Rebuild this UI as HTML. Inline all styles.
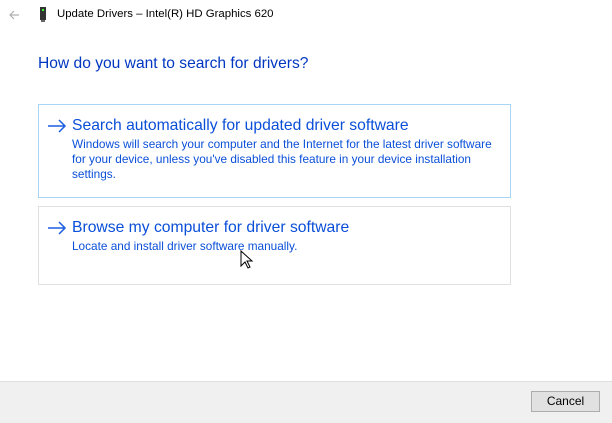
<!DOCTYPE html>
<html><head><style>
body{margin:0;width:612px;height:422px;background:#fff;position:relative;font-family:"Liberation Sans",sans-serif;overflow:hidden}
.a{position:absolute}
.box{position:absolute;left:38px;width:471px;border:1px solid #e0e0e0}
.t{position:absolute;left:33px;font-size:15.7px;color:#0a4fd8;white-space:nowrap}
.d{position:absolute;left:33px;font-size:11.8px;line-height:15px;color:#0a4fd8;width:432px}
.ar{position:absolute;left:8px;top:14px}
</style></head><body>
<svg class="a" style="left:8px;top:9px" width="12" height="12"><path d="M11 6H2M6 2L2 6l4 4" stroke="#b0b0b0" stroke-width="1.2" fill="none"/></svg>
<svg class="a" style="left:40px;top:7px" width="8" height="16"><rect x="0" y="0" width="6" height="13" fill="#333"/><rect x="2" y="2" width="2" height="2" fill="#3f3"/><rect x="1" y="13" width="4" height="2" fill="#666"/></svg>
<div class="a" style="left:57px;top:8px;font-size:11.4px;color:#000">Update Drivers – Intel(R) HD Graphics 620</div>
<div class="a" style="left:38px;top:55px;font-size:15.6px;color:#0037c0">How do you want to search for drivers?</div>
<div class="box" style="top:104px;height:92px;border-color:#a6d5f5">
<svg class="ar" width="20" height="14"><path d="M1 7H18M12 1l6 6-6 6" stroke="#1a5fe0" stroke-width="1.5" fill="none"/></svg>
<div class="t" style="top:12px">Search automatically for updated driver software</div>
<div class="d" style="top:32px">Windows will search your computer and the Internet for the latest driver software for your device, unless you've disabled this feature in your device installation settings.</div>
</div>
<div class="box" style="top:206px;height:77px">
<svg class="ar" width="20" height="14"><path d="M1 7H18M12 1l6 6-6 6" stroke="#1a5fe0" stroke-width="1.5" fill="none"/></svg>
<div class="t" style="top:12px">Browse my computer for driver software</div>
<div class="d" style="top:32px">Locate and install driver software manually.</div>
</div>
<svg class="a" style="left:240px;top:250px" width="14" height="20"><path d="M1 1v15l4-4 3 6 2-1-3-6h5z" fill="#fff" stroke="#000" stroke-width="1"/></svg>
<div class="a" style="left:0;top:381px;width:612px;height:41px;background:#f0f0f0;border-top:1px solid #dfdfdf"></div>
<div class="a" style="left:531px;top:391px;width:67px;height:19px;background:#e1e1e1;border:1px solid #adadad;font-size:12px;text-align:center;line-height:19px">Cancel</div>
</body></html>
